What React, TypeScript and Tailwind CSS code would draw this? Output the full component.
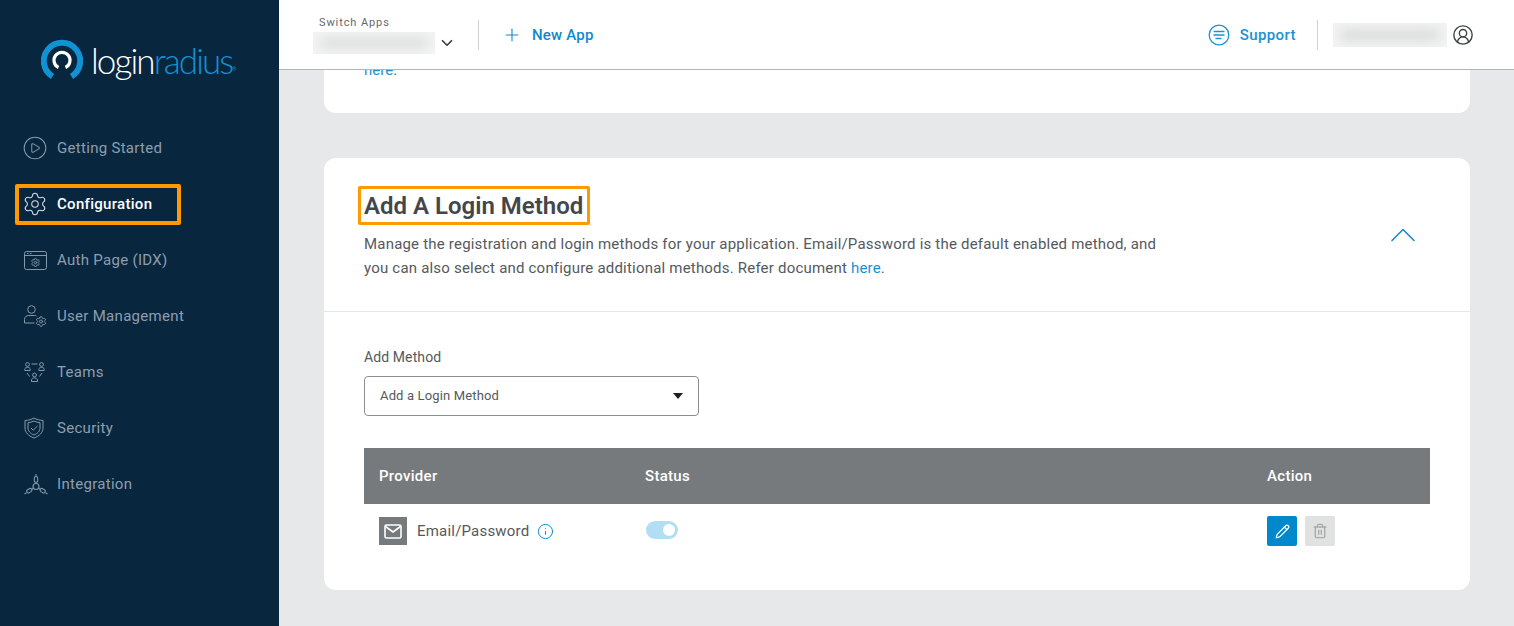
import { ChevronDown, ChevronUp, CirclePlay, Info, Pencil, Plus, Settings, Trash2, UserCircle2 } from "lucide-react";
import React from "react";

const font = "font-['Roboto',sans-serif]";

function AuthIcon() {
  return (
    <svg width="23" height="19" viewBox="0 0 23 19" fill="none" stroke="currentColor" strokeWidth="1">
      <rect x="0.500" y="0.500" width="22" height="18" rx="2" />
      <path d="M0.500 4.500h22M3 2.500h1.500M6 2.500h1.500" />
      <Settings x="6.500" y="6.500" width="10" height="10" strokeWidth="2.200" />
    </svg>
  );
}

function UserGearIcon() {
  return (
    <svg width="23" height="22" viewBox="0 0 23 22" fill="none" stroke="currentColor" strokeWidth="1">
      <circle cx="7.500" cy="4.500" r="3.800" />
      <path d="M0.500 18v-3.500c0-2.500 2-4 4-4h6c.8 0 1.500 .2 2 .5M0.500 18h10" />
      <Settings x="11" y="10.500" width="12" height="12" strokeWidth="1.900" />
    </svg>
  );
}

function TeamsIcon() {
  return (
    <svg width="21" height="20" viewBox="0 0 21 20" fill="none" stroke="currentColor" strokeWidth="1">
      <circle cx="3.500" cy="2.500" r="1.900" />
      <path d="M0.800 8.500V7.300C0.800 6 2 5.500 3.500 5.500S6.200 6 6.200 7.300v1.200z" />
      <circle cx="17.500" cy="2.500" r="1.900" />
      <path d="M14.800 8.500V7.300c0-1.300 1.200-1.800 2.700-1.800s2.700 .5 2.700 1.800v1.200z" />
      <circle cx="10.500" cy="13" r="1.900" />
      <path d="M7.500 19.500v-1.700c0-1.200 1.400-1.800 3-1.800s3 .6 3 1.800v1.700z" />
      <path d="M7.500 2h6M3 11l2.500 3.500M18 11l-2.500 3.500" />
    </svg>
  );
}

function ShieldIcon() {
  return (
    <svg width="20" height="22" viewBox="0 0 20 22" fill="none" stroke="currentColor" strokeWidth="1">
      <path d="M10 1c2.500 1.500 5.500 2.300 9 2.500V11c0 4.500-3.500 8-9 10C4.500 19 1 15.500 1 11V3.500C4.500 3.300 7.500 2.500 10 1z" />
      <path d="M10 4c2 1 3.800 1.500 6 1.700V11c0 3.200-2.500 5.500-6 7-3.500-1.500-6-3.800-6-7V5.700C6.200 5.500 8 5 10 4z" />
      <path d="M7 11l2.200 2.200L13.500 9" />
    </svg>
  );
}

function IntegrationIcon() {
  return (
    <svg width="24" height="22" viewBox="0 0 24 22" fill="none" stroke="currentColor" strokeWidth="1.100">
      <circle cx="12" cy="13.500" r="3" />
      <rect x="10.300" y="3.500" width="3.400" height="6" rx="1.700" />
      <path d="M12 1v2.500M9.500 15.200l-1.500 1M14.500 15.200l1.500 1" />
      <rect x="2.500" y="16" width="5.500" height="3.400" rx="1.700" transform="rotate(-30 5.250 17.700)" />
      <rect x="16" y="16" width="5.500" height="3.400" rx="1.700" transform="rotate(30 18.750 17.700)" />
      <path d="M0.500 21l2-1.200M23.500 21l-2-1.200" />
    </svg>
  );
}

const navItems: { label: string; icon: React.ReactNode; active?: boolean }[] = [
  { label: "Getting Started", icon: <CirclePlay size={26} strokeWidth={0.95} className="-ml-[2px]" /> },
  { label: "Configuration", icon: <Settings size={26} strokeWidth={1} className="-ml-[2px]" />, active: true },
  { label: "Auth Page (IDX)", icon: <AuthIcon /> },
  { label: "User Management", icon: <UserGearIcon /> },
  { label: "Teams", icon: <TeamsIcon /> },
  { label: "Security", icon: <ShieldIcon /> },
  { label: "Integration", icon: <IntegrationIcon /> },
];

function Logo() {
  return (
    <div className="flex h-[120px] items-center pl-[41px]">
      <svg width="42" height="42" viewBox="0 0 42 42" fill="none" className="mb-[3px] shrink-0">
        <path d="M11.500 38.500A18.200 18.200 0 1 1 30.500 38.500" stroke="#1192d3" strokeWidth="6" />
        <path d="M17.500 29.500A8 8 0 1 1 24.500 29.500" stroke="#fff" strokeWidth="3.200" />
      </svg>
      <span className="ml-[8px] font-['Lato',sans-serif] text-[35px] font-light leading-none tracking-[-1.9px] text-white">
        login<span className="text-[#1192d3]">radius</span>
      </span>
      <span className="mt-[18px] text-[5px] leading-none text-[#1192d3]">®</span>
    </div>
  );
}

function Sidebar() {
  return (
    <aside className="flex h-full w-[279px] shrink-0 flex-col bg-[#09263f]">
      <Logo />
      <nav className="flex flex-col">
        {navItems.map((item) => (
          <div key={item.label} className="relative flex h-[56px] items-center">
            <span className={`flex w-[57px] pl-[24px] ${item.active ? "text-[#d5dde3]" : "text-[#8399aa]"}`}>
              {item.icon}
            </span>
            <span className={`text-[15px] tracking-[0.3px] ${item.active ? "font-medium text-white" : "text-[#8e9ead]"}`}>
              {item.label}
            </span>
            {item.active && (
              <span className="absolute left-[15px] top-[8px] h-[41px] w-[166px] rounded-[2px] border-[4px] border-[#ff9900]" />
            )}
          </div>
        ))}
      </nav>
    </aside>
  );
}

function Blurred({ className }: { className: string }) {
  return (
    <div className={`overflow-hidden bg-[#f4f4f4] ${className}`}>
      <div className="m-[6px] h-[calc(100%-12px)] rounded-full bg-[#d9dbdb] blur-[6px]" />
    </div>
  );
}

function Header() {
  return (
    <header className="flex h-[70px] shrink-0 items-center border-b border-[#b4b4b4] bg-white pl-[34px] pr-[40px]">
      <div className="flex h-[48px] w-[165px] items-start">
        <div className="w-[122px] pt-[3px]">
          <div className="pb-[2px] pl-[6px] pt-[1px] text-[11px] leading-[15px] tracking-[0.9px] text-[#66696c]">Switch Apps</div>
          <Blurred className="h-[22px] w-[122px]" />
        </div>
        <ChevronDown size={18} strokeWidth={2.300} className="ml-[3px] mt-[23px] text-[#3d4145]" />
      </div>
      <div className="h-[30px] w-px bg-[#cfd0d1]" />
      <Plus size={20} strokeWidth={1.300} className="ml-[23px] text-[#1288cc]" />
      <span className="ml-[10px] pt-[1px] text-[15px] font-medium tracking-[0.2px] text-[#1288cc]">New App</span>
      <div className="ml-auto flex items-center">
        <svg width="22" height="22" viewBox="0 0 22 22" fill="none" stroke="#1a92d4" strokeWidth="1.300">
          <circle cx="11" cy="11" r="9.800" />
          <path d="M5.500 7.500h11M5.500 11h11M7.500 14.500h6" />
        </svg>
        <span className="ml-[10px] pt-[1px] text-[15px] font-medium tracking-[0.4px] text-[#1a92d4]">Support</span>
        <div className="ml-[21px] h-[30px] w-px bg-[#cfd0d1]" />
        <Blurred className="ml-[15px] h-[24px] w-[114px]" />
        <UserCircle2 size={22} strokeWidth={1.500} className="ml-[5px] text-[#3b4045]" />
      </div>
    </header>
  );
}

function LoginMethodTable() {
  return (
    <div className="mt-[32px] text-[15px]">
      <div className="grid h-[56px] grid-cols-[281px_622px_1fr] items-center bg-[#777a7d] pt-[1px] font-medium tracking-[0.3px] text-white">
        <div className="pl-[15px]">Provider</div>
        <div>Status</div>
        <div>Action</div>
      </div>
      <div className="grid grid-cols-[281px_622px_1fr] items-center pt-[12px]">
        <div className="flex items-center pl-[15px]">
          <span className="flex h-[28px] w-[28px] items-center justify-center bg-[#777a7d]">
            <svg width="18" height="15" viewBox="0 0 18 15" fill="none" stroke="#fff" strokeWidth="1.600">
              <rect x="1" y="1" width="16" height="13" rx="1.500" />
              <path d="M1.500 2.500L9 8l7.500-5.500" />
            </svg>
          </span>
          <span className="ml-[10px] tracking-[0.2px] text-[#55595d]">Email/Password</span>
          <Info size={17} strokeWidth={1.400} className="ml-[8px] text-[#1288cc]" />
        </div>
        <div className="-mt-[2px] flex pl-[1px]">
          <span className="flex h-[18px] w-[32px] items-center justify-end rounded-full bg-[#b2def3] pr-[3px]">
            <span className="h-[12px] w-[12px] rounded-full bg-white" />
          </span>
        </div>
        <div className="flex gap-[8px]">
          <span className="flex h-[30px] w-[30px] items-center justify-center rounded-[2px] bg-[#0088cc] text-white">
            <Pencil size={15} strokeWidth={2} />
          </span>
          <span className="flex h-[30px] w-[30px] items-center justify-center rounded-[2px] bg-[#e0e1e1] text-[#a9abac]">
            <Trash2 size={16} strokeWidth={2} />
          </span>
        </div>
      </div>
    </div>
  );
}

export default function App() {
  return (
    <div className={`flex h-[626px] w-[1514px] overflow-hidden ${font}`}>
      <Sidebar />
      <div className="flex min-w-0 flex-1 flex-col bg-[#e7e8ea]">
        <Header />
        <main className="flex-1 overflow-hidden pl-[45px] pr-[44px]">
          <div className="flow-root h-[43px] rounded-b-[12px] bg-white pl-[40px]">
            <p className="-mt-[10px] text-[15px] leading-[20px] text-[#55595d]">
              <span className="text-[#1a8fd1]">here</span>.
            </p>
          </div>
          <section className="mt-[45px] h-[432px] rounded-[12px] bg-white">
            <div className="flex h-[154px] items-start justify-between border-b border-[#e6e7e8] pl-[40px] pr-[45px] pt-[30px]">
              <div>
                <h2 className="relative text-[24px] font-semibold leading-[36px] text-[#43474b]">
                  Add A Login Method
                  <span className="absolute left-[-6px] top-[-2px] h-[39px] w-[232px] rounded-[2px] border-[3px] border-[#ff9900]" />
                </h2>
                <p className="mt-[8px] w-[800px] text-[15px] leading-[24px] tracking-[0.2px] text-[#55595d]">
                  Manage the registration and login methods for your application. Email/Password is the default enabled method, and you can also select and configure additional methods. Refer document <span className="text-[#1a8fd1]">here</span>.
                </p>
              </div>
              <ChevronUp size={44} strokeWidth={0.85} className="mt-[25px] text-[#1288cc]" />
            </div>
            <div className="px-[40px] pt-[34px]">
              <label className="block text-[14px] leading-[22px] tracking-[0.1px] text-[#55595d]">Add Method</label>
              <div className="mt-[8px] flex h-[40px] w-[335px] items-center justify-between rounded-[4px] border border-[#8b8e90] pl-[15px] pr-[15px]">
                <span className="text-[13px] tracking-[0.15px] text-[#55595d]">Add a Login Method</span>
                <span className="h-0 w-0 border-x-[5.500px] border-t-[6px] border-x-transparent border-t-[#1d2125]" />
              </div>
              <LoginMethodTable />
            </div>
          </section>
        </main>
      </div>
    </div>
  );
}
